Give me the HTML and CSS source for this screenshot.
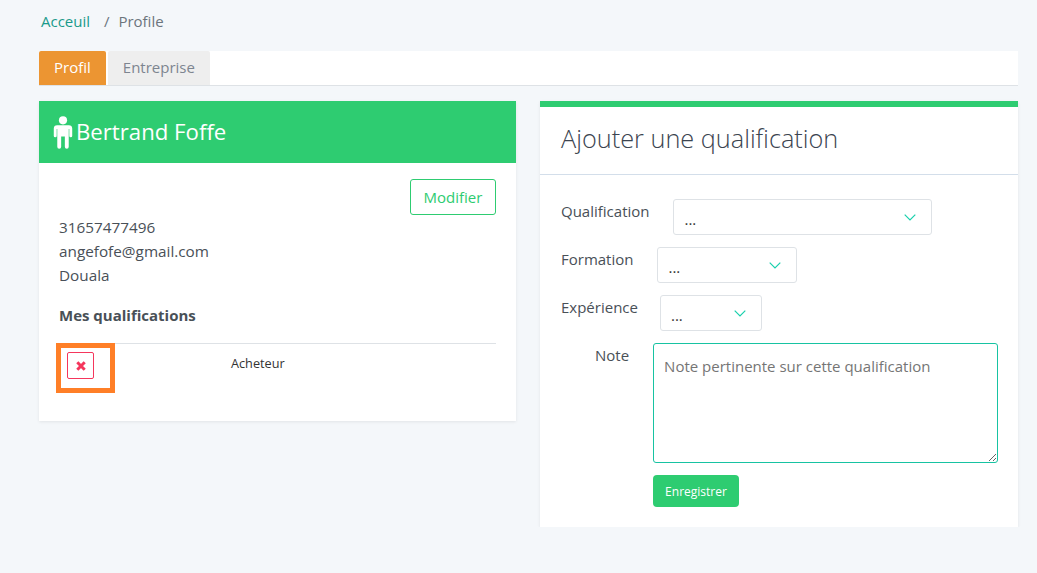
FILE: index.html
```html
<!DOCTYPE html>
<html lang="fr">
<head>
    <meta charset="UTF-8">
    <title>Profile</title>
    <link rel="stylesheet" href="styles.css">
</head>
<body>
    <nav class="breadcrumb">
        <a href="#">Acceuil</a>
        <span class="sep">/</span>
        <span>Profile</span>
    </nav>

    <div class="tabs">
        <a class="tab active" href="#">Profil</a>
        <a class="tab" href="#">Entreprise</a>
    </div>

    <div class="columns">
        <section class="card user-card">
            <header class="user-head">
                <svg class="user-icon" width="20" height="33" viewBox="0 0 20 34">
                    <circle cx="10" cy="4.5" r="4.2" fill="#fff"/>
                    <path d="M4 9.5h12a3.500 3.500 0 0 1 3.500 3.500v7.500a1.500 1.500 0 0 1-3 0v-7h-.6v18.300a2 2 0 0 1-4 0V21h-3.800v10.800a2 2 0 0 1-4 0V13.500h-.6v7a1.500 1.500 0 0 1-3 0V13A3.500 3.500 0 0 1 4 9.500z" fill="#fff"/>
                </svg>
                <h2>Bertrand Foffe</h2>
            </header>
            <div class="user-body">
                <div class="actions"><button class="btn-outline">Modifier</button></div>
                <p>31657477496</p>
                <p>angefofe@gmail.com</p>
                <p>Douala</p>
                <h3>Mes qualifications</h3>
                <div class="qualif-row">
                    <div class="qualif-action">
                        <button class="btn-delete" aria-label="Supprimer">
                            <svg width="10" height="10" viewBox="0 0 10 10"><path d="M1.300 1.300l7.400 7.400M8.700 1.300l-7.400 7.400" stroke="#f5365c" stroke-width="3" fill="none"/></svg>
                        </button>
                    </div>
                    <div class="qualif-name">Acheteur</div>
                </div>
            </div>
        </section>

        <section class="card form-card">
            <h1>Ajouter une qualification</h1>
            <form class="qualif-form">
                <div class="form-row">
                    <label>Qualification</label>
                    <div class="select select-lg">
                        <span>...</span>
                        <svg width="12" height="7" viewBox="0 0 12 7"><path d="M.7.7L6 6l5.300-5.300" stroke="#18d0ac" stroke-width="1.200" fill="none"/></svg>
                    </div>
                </div>
                <div class="form-row">
                    <label>Formation</label>
                    <div class="select select-md">
                        <span>...</span>
                        <svg width="12" height="7" viewBox="0 0 12 7"><path d="M.7.7L6 6l5.300-5.300" stroke="#18d0ac" stroke-width="1.200" fill="none"/></svg>
                    </div>
                </div>
                <div class="form-row">
                    <label>Expérience</label>
                    <div class="select select-sm">
                        <span>...</span>
                        <svg width="12" height="7" viewBox="0 0 12 7"><path d="M.7.7L6 6l5.300-5.300" stroke="#18d0ac" stroke-width="1.200" fill="none"/></svg>
                    </div>
                </div>
                <div class="form-row note-row">
                    <label>Note</label>
                    <textarea placeholder="Note pertinente sur cette qualification"></textarea>
                </div>
                <button type="button" class="btn-save">Enregistrer</button>
            </form>
        </section>
    </div>
</body>
</html>
```

FILE: styles.css
```css
body {
    margin: 0;
    padding: 0 19px 0 39px;
    background-color: #f4f7fa;
    font-family: "Open Sans", Arial, sans-serif;
    font-size: 15px;
    color: #495057;
}
.breadcrumb {
    height: 51px;
    box-sizing: border-box;
    padding: 11px 0 0 2px;
    line-height: 20px;
    color: #6c757d;
}
.breadcrumb a {
    color: #1a9a8a;
    text-decoration: none;
}
.breadcrumb .sep {
    margin: 0 5px 0 10px;
}
.tabs {
    display: flex;
    gap: 2px;
    height: 35px;
    box-sizing: border-box;
    background-color: #fff;
    border-bottom: 1px solid #dee2e6;
}
.tab {
    padding: 0 15px;
    line-height: 32px;
    text-decoration: none;
    color: #7d8590;
    background-color: #eee;
    border-radius: 2px 2px 0 0;
}
.tab.active {
    background-color: #ec9532;
    color: #fff;
}
.columns {
    display: flex;
    align-items: flex-start;
    gap: 24px;
    margin-top: 15px;
}
.card {
    background-color: #fff;
    box-shadow: 0 1px 3px rgba(0, 0, 0, 0.08);
}
.user-card {
    width: 477px;
    height: 320px;
}
.user-head {
    display: flex;
    align-items: center;
    height: 62px;
    padding-left: 14px;
    background-color: #2ecc71;
    color: #fff;
}
.user-icon {
    margin-right: 3px;
}
.user-head h2 {
    margin: 0 0 2px;
    font-size: 22.200px;
    font-weight: 400;
}
.user-body {
    padding: 16px 20px;
}
.actions {
    display: flex;
    justify-content: flex-end;
}
.btn-outline {
    width: 86px;
    height: 36px;
    padding: 0;
    background: #fff;
    border: 1px solid #2ecc71;
    border-radius: 3px;
    color: #2ecc71;
    font: inherit;
}
.user-body p {
    margin: 0;
    font-size: 15.300px;
    line-height: 24px;
}
.user-body h3 {
    margin: 16px 0 16px;
    font-size: 15px;
    line-height: 24px;
    font-weight: 700;
}
.qualif-row {
    display: flex;
    border-top: 1px solid #dee2e6;
}
.qualif-action {
    /* encadré orange par dessus la ligne */
    width: 59px;
    height: 50px;
    box-sizing: border-box;
    margin: -1px 0 0 -3px;
    padding: 4px 0 0 6px;
    border: 5px solid #ff7f27;
}
.btn-delete {
    display: flex;
    align-items: center;
    justify-content: center;
    width: 27px;
    height: 27px;
    padding: 0;
    background: #fff;
    border: 1px solid #f5365c;
    border-radius: 2px;
}
.qualif-name {
    margin-left: 116px;
    padding-top: 10px;
    font-size: 12.700px;
    line-height: 18px;
    color: #333;
}
.form-card {
    width: 478px;
    height: 426px;
    box-sizing: border-box;
    border-top: 6px solid #2ecc71;
}
.form-card h1 {
    margin: 0;
    height: 68px;
    box-sizing: border-box;
    padding: 14px 21px 0;
    border-bottom: 1px solid #d3deea;
    font-size: 25.300px;
    line-height: 34px;
    font-weight: 300;
    color: #3b4450;
}
.qualif-form {
    padding: 24px 20px 0 21px;
}
.form-row {
    display: flex;
    align-items: flex-start;
    margin-bottom: 12px;
}
.form-row label {
    padding-top: 2px;
    line-height: 20px;
    margin-right: 24px;
}
.select {
    display: flex;
    align-items: center;
    justify-content: space-between;
    height: 36px;
    box-sizing: border-box;
    padding: 0 15px 0 10px;
    background-color: #fff;
    border: 1px solid #dee2e6;
    border-radius: 3px;
    line-height: 36px;
}
.select span {
    padding-top: 3px;
    color: #333;
}
.select-lg { width: 259px; }
.select-md { width: 140px; }
.select-sm { width: 102px; margin-left: -2px; }
.note-row label {
    padding-left: 34px;
}
.note-row textarea {
    width: 345px;
    height: 120px;
    box-sizing: border-box;
    padding: 11px 10px;
    border: 1px solid #17c3a2;
    border-radius: 3px;
    outline: none;
    font: inherit;
    line-height: 22px;
}
.note-row textarea::placeholder {
    color: #757575;
}
.btn-save {
    display: block;
    width: 86px;
    height: 32px;
    margin-left: 92px;
    padding: 0;
    background-color: #2ecc71;
    border: none;
    border-radius: 4px;
    color: #fff;
    font: inherit;
    font-size: 12px;
}
```
